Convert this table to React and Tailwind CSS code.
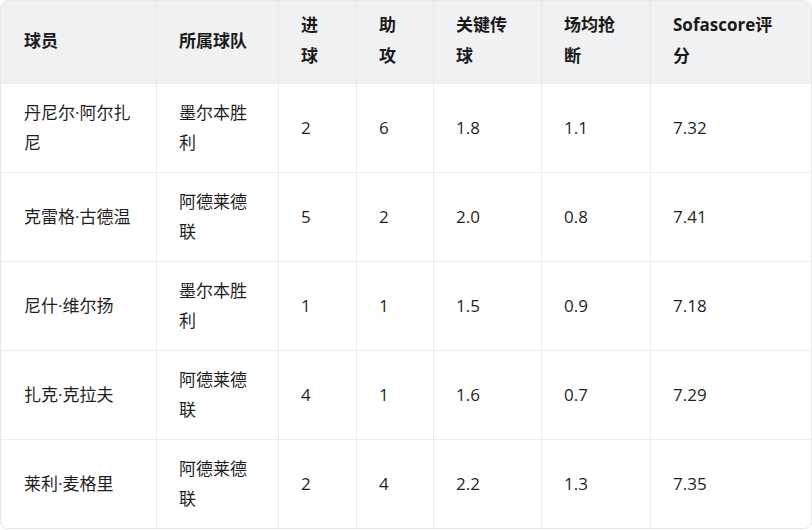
import React from "react";

const headers = ["球员", "所属球队", "进球", "助攻", "关键传球", "场均抢断", "Sofascore评分"];

const rows = [
  ["丹尼尔·阿尔扎尼", "墨尔本胜利", "2", "6", "1.8", "1.1", "7.32"],
  ["克雷格·古德温", "阿德莱德联", "5", "2", "2.0", "0.8", "7.41"],
  ["尼什·维尔扬", "墨尔本胜利", "1", "1", "1.5", "0.9", "7.18"],
  ["扎克·克拉夫", "阿德莱德联", "4", "1", "1.6", "0.7", "7.29"],
  ["莱利·麦格里", "阿德莱德联", "2", "4", "2.2", "1.3", "7.35"],
];

export default function App() {
  return (
    <div
      className="w-[812px] h-[530px] bg-white"
      style={{ fontFamily: '"Open Sans", "Noto Sans CJK SC", sans-serif' }}
    >
      <div className="w-[812px] rounded-lg border border-[#e8e8e8] overflow-hidden">
        <div className="grid grid-cols-[155px_122px_78px_77px_108px_109px_161px]">
          {headers.map((h, i) => (
            <div
              key={h}
              className={
                "flex items-center bg-[#f0f1f3] pt-[8px] pb-[12px] pr-[22px] text-[17px] leading-[31px] font-bold text-[#1a1a1a] min-h-[82px] " +
                (i === 0 ? "pl-[23px]" : "pl-[22px] border-l border-[#e8e8e8]")
              }
            >
              <span>{h}</span>
            </div>
          ))}
          {rows.map((r, ri) =>
            r.map((c, ci) => (
              <div
                key={ri + "-" + ci}
                className={
                  "flex items-center border-t border-[#ececec] py-[14px] pr-[22px] text-[17px] leading-[30px] text-[#1f1f1f] min-h-[89px] " +
                  (ci === 0 ? "pl-[23px]" : "pl-[22px] border-l border-l-[#ececec]")
                }
              >
                <span>{c}</span>
              </div>
            ))
          )}
        </div>
      </div>
    </div>
  );
}
